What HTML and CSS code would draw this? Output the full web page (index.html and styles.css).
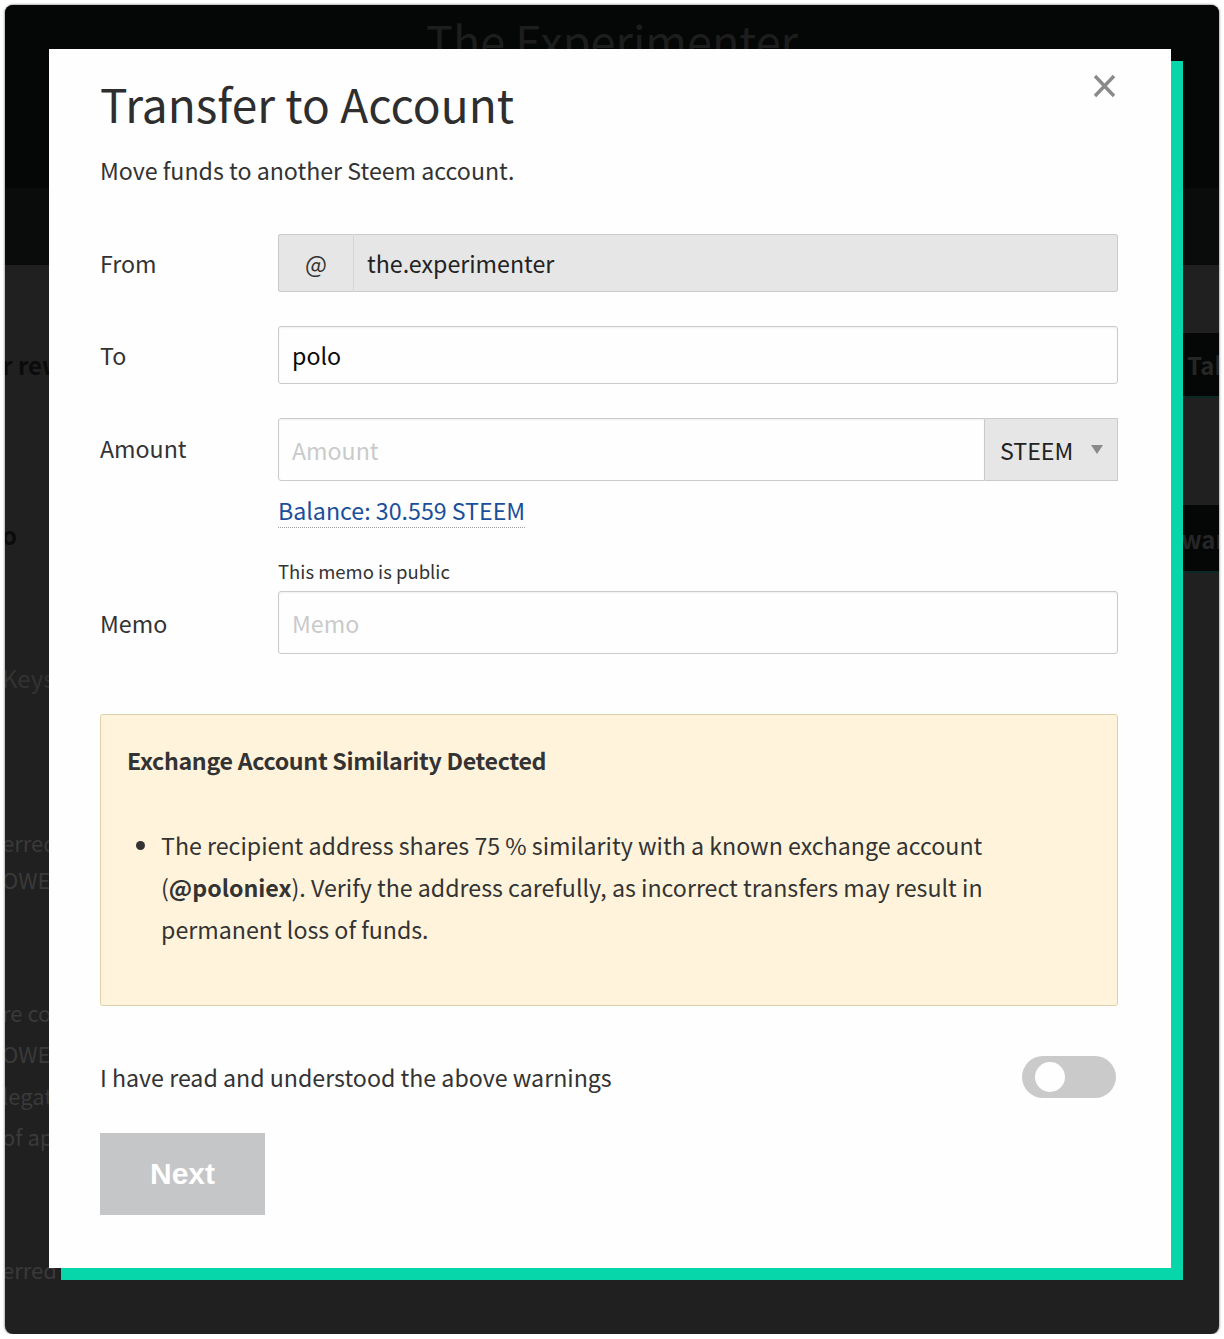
FILE: index.html
```html
<!DOCTYPE html>
<html lang="en">

<head>
    <meta charset="UTF-8">
    <meta name="viewport" content="width=device-width, initial-scale=1.0">
    <title>Transfer to Account</title>
    <link rel="stylesheet" href="styles.css">
</head>

<body>
<div class="screen">
    <!-- page behind the dialog -->
    <div class="page">
        <header class="page_head">
            <h1>The Experimenter</h1>
        </header>
        <div class="page_nav"></div>
        <div class="page_main">
            <div class="page_left">
                <p class="bg_bold bg_first">r rewards</p>
                <p class="bg_bold bg_info">o</p>
                <p class="bg_keys">Keys</p>
                <div class="bg_pair">erred<br>OWER</div>
                <div class="bg_four">re coming<br>OWER<br>legated<br>of approx</div>
                <p class="bg_last">erred</p>
            </div>
            <div class="page_right">
                <div class="bg_btn bg_btn_take">Take</div>
                <div class="bg_btn bg_btn_rew">Rewards</div>
            </div>
        </div>
    </div>

    <!-- dialog -->
    <div class="overlay">
        <div class="modal">
            <button class="close" aria-label="Close">
                <svg width="23" height="24" viewBox="0 0 23 24">
                    <path d="M2 2 L21 22 M21 2 L2 22" stroke="#8a8a8a" stroke-width="3.4" fill="none"/>
                </svg>
            </button>
            <h1 class="modal_title">Transfer to Account</h1>
            <p class="modal_sub">Move funds to another Steem account.</p>

            <div class="row row_from">
                <div class="row_label">From</div>
                <div class="group">
                    <span class="addon">@</span>
                    <div class="field field_disabled">the.experimenter</div>
                </div>
            </div>

            <div class="row">
                <div class="row_label">To</div>
                <div class="field">polo</div>
            </div>

            <div class="row">
                <div class="row_label row_label_up">Amount</div>
                <div class="group group_tall">
                    <div class="field field_ph">Amount</div>
                    <div class="select">STEEM <span class="caret"></span></div>
                </div>
            </div>
            <div class="extra">
                <a class="balance" href="#">Balance: 30.559 STEEM</a>
            </div>

            <div class="extra memo_note">This memo is public</div>
            <div class="row row_memo">
                <div class="row_label">Memo</div>
                <div class="field field_tall field_ph">Memo</div>
            </div>

            <div class="warning">
                <div class="warning_title">Exchange Account Similarity Detected</div>
                <ul class="warning_list">
                    <li>The recipient address shares 75 % similarity with a known exchange account (<b>@poloniex</b>). Verify the address carefully, as incorrect transfers may result in permanent loss of funds.</li>
                </ul>
            </div>

            <div class="confirm">
                <span>I have read and understood the above warnings</span>
                <div class="toggle"><span class="knob"></span></div>
            </div>

            <button class="next">Next</button>
        </div>
    </div>
</div>
</body>

</html>
```

FILE: styles.css
```css
body {
    margin: 0;
    background: #fff;
    font-family: "Noto Sans CJK SC", "Source Sans Pro", sans-serif;
}

.screen {
    margin: 5px 0 0 5px;
    width: 1214px;
    height: 1329px;
    border-radius: 8px;
    overflow: hidden;
    position: relative;
    box-shadow: 0 0 2px 1px rgba(0, 0, 0, 0.3);
    background: #202020;
}

/* ---- page behind ---- */
.page_head {
    height: 183px;
    background: #050606;
    overflow: hidden;
}

.page_head h1 {
    margin: 5px 0 0;
    text-align: center;
    font-size: 45px;
    line-height: 60px;
    font-weight: 400;
    color: #1d1d1d;
}

.page_nav {
    height: 77px;
    background: #0a0b0b;
}

.page_main {
    display: flex;
}

.page_left {
    flex: 1;
    margin-left: -3px;
    color: #3a3a3a;
    font-size: 22px;
    white-space: nowrap;
}

.page_left p {
    margin: 0;
    line-height: 40px;
}

.bg_bold {
    font-weight: 700;
    font-size: 24px;
    color: #0b0b0b;
}

.bg_first { margin-top: 80px !important; }
.bg_info { margin-top: 130px !important; }

.bg_keys {
    margin-top: 103px !important;
    font-size: 24px;
    color: #333;
}

.bg_pair {
    margin-top: 126px;
    line-height: 37px;
}

.bg_four {
    margin-top: 94px;
    line-height: 41.3px;
}

.bg_last { margin-top: 92px !important; }

.page_right {
    width: 36px;
}

.bg_btn {
    width: 200px;
    box-sizing: border-box;
    background: #050606;
    border-bottom: 2px solid #0b2822;
    color: #262626;
    font-size: 24px;
    font-weight: 600;
    display: flex;
    align-items: center;
    white-space: nowrap;
}

.bg_btn_take {
    margin-top: 68px;
    height: 65px;
    padding-left: 4px;
}

.bg_btn_rew {
    margin-top: 107px;
    height: 68px;
    margin-left: -32px;
}

/* ---- dialog ---- */
.overlay {
    position: absolute;
    top: 0;
    left: 0;
    right: 0;
    bottom: 0;
    padding: 44px 0 0 44px;
}

.modal {
    position: relative;
    box-sizing: border-box;
    width: 1122px;
    height: 1219px;
    padding: 24px 53px 0 51px;
    background: #fefefe;
    box-shadow: 12px 12px 0 0 #06d6a9;
    color: #333;
}

.close {
    position: absolute;
    top: 25px;
    right: 55px;
    padding: 0;
    border: 0;
    background: none;
    line-height: 0;
}

.modal_title {
    margin: 0;
    font-size: 46px;
    line-height: 60px;
    font-weight: 400;
    color: #2e2e2e;
}

.modal_sub {
    margin: 19px 0 0;
    font-size: 23.2px;
    line-height: 36px;
}

.row {
    display: flex;
    align-items: center;
    margin-top: 34px;
}

.row_from {
    margin-top: 46px;
}

.row_label {
    width: 178px;
    flex: none;
    font-size: 23.2px;
}

.row_label_up {
    margin-top: -4px;
}

.group {
    flex: 1;
    display: flex;
    height: 58px;
}

.group_tall {
    height: 63px;
}

.addon {
    width: 76px;
    box-sizing: border-box;
    display: flex;
    align-items: center;
    justify-content: center;
    background: #e6e6e6;
    border: 1px solid #cacaca;
    border-right-color: #d6d6d6;
    border-radius: 3px 0 0 3px;
    font-size: 23.2px;
    color: #333;
}

.field {
    flex: 1;
    box-sizing: border-box;
    height: 58px;
    display: flex;
    align-items: center;
    padding: 0 13px;
    border: 1px solid #cacaca;
    border-radius: 3px;
    background: #fefefe;
    font-size: 23.2px;
    color: #0a0a0a;
    box-shadow: inset 0 1px 2px rgba(10, 10, 10, 0.06);
}

.group .field {
    height: auto;
}

.field_disabled {
    background: #e6e6e6;
    border-left: 0;
    border-radius: 0 3px 3px 0;
    color: #222;
    box-shadow: none;
}

.field_tall {
    height: 63px;
}

.field_ph {
    color: #cacaca;
}

.group_tall .field {
    border-radius: 3px 0 0 3px;
}

.select {
    width: 133px;
    box-sizing: border-box;
    display: flex;
    align-items: center;
    padding-left: 15px;
    background: #e6e6e6;
    border: 1px solid #cacaca;
    border-left: 0;
    font-size: 23.2px;
    color: #222;
}

.caret {
    margin-left: auto;
    margin-right: 14px;
    width: 0;
    height: 0;
    border-left: 6.5px solid transparent;
    border-right: 6.5px solid transparent;
    border-top: 9px solid #8a8a8a;
}

.extra {
    margin-left: 178px;
}

.balance {
    display: inline-block;
    margin-top: 12px;
    font-size: 23.2px;
    color: #1a4f9a;
    text-decoration: none;
    border-bottom: 1px dotted #a0a0a0;
    line-height: 34px;
}

.memo_note {
    margin-top: 31px;
    font-size: 18.5px;
    line-height: 24px;
    color: #333;
}

.row_memo {
    margin-top: 8px;
}

.warning {
    margin-top: 60px;
    padding: 27px 26px 55px;
    background: #fff3db;
    border: 1px solid #e0cfab;
    border-radius: 3px;
    font-size: 23.2px;
    color: #333;
}

.warning_title {
    font-weight: 600;
    line-height: 36px;
    letter-spacing: -0.3px;
}

.warning_list {
    margin: 46px 0 0;
    padding-left: 34px;
    line-height: 42px;
}

.warning_list b {
    font-weight: 700;
}

.confirm {
    margin-top: 49.5px;
    display: flex;
    align-items: center;
    justify-content: space-between;
    font-size: 23.2px;
    color: #333;
}

.toggle {
    width: 94px;
    height: 42px;
    margin-right: 2px;
    border-radius: 21px;
    background: #cacaca;
    display: flex;
    align-items: center;
    padding-left: 13px;
    box-sizing: border-box;
}

.knob {
    width: 30px;
    height: 30px;
    border-radius: 50%;
    background: #fefefe;
}

.next {
    margin-top: 35px;
    width: 165px;
    height: 82px;
    border: 0;
    background: #c5c6c8;
    color: #fff;
    font-family: "Liberation Sans", Arial, sans-serif;
    font-weight: 700;
    font-size: 30px;
    padding: 0;
}
```
